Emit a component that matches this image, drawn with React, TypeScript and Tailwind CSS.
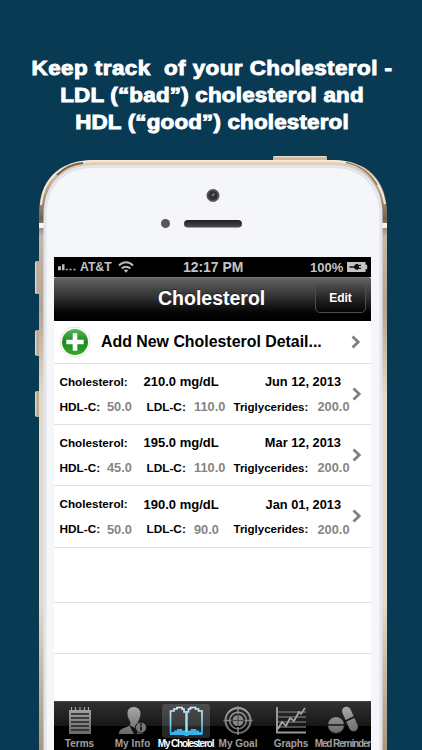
import type { ReactNode } from "react";

const readings = [
  { total: "210.0 mg/dL", date: "Jun 12, 2013", hdl: "50.0", ldl: "110.0", triglycerides: "200.0" },
  { total: "195.0 mg/dL", date: "Mar 12, 2013", hdl: "45.0", ldl: "110.0", triglycerides: "200.0" },
  { total: "190.0 mg/dL", date: "Jan 01, 2013", hdl: "50.0", ldl: "90.0", triglycerides: "200.0" },
];

function Chevron() {
  return (
    <svg width="10" height="14" viewBox="0 0 10 14" className="shrink-0">
      <path d="M1.5 1.5 7.2 7 1.5 12.5" fill="none" stroke="#808080" strokeWidth="2.8" />
    </svg>
  );
}

function PhoneBody() {
  return (
    <svg width="422" height="600" viewBox="0 150 422 600" className="absolute left-0 top-[150px]">
      <defs>
        <linearGradient id="rim" x1="0" y1="160" x2="0" y2="750" gradientUnits="userSpaceOnUse">
          <stop offset="0" stopColor="#e8d5bd" />
          <stop offset="0.06" stopColor="#b09a7f" />
          <stop offset="0.1" stopColor="#74624f" />
          <stop offset="0.13" stopColor="#c5b7a5" />
          <stop offset="0.25" stopColor="#b6a48e" />
          <stop offset="0.4" stopColor="#e5d9c8" />
          <stop offset="0.75" stopColor="#e5d9c8" />
          <stop offset="1" stopColor="#aa967d" />
        </linearGradient>
        <linearGradient id="button" x1="0" x2="1">
          <stop offset="0" stopColor="#eee4d5" />
          <stop offset="0.4" stopColor="#b4a590" />
          <stop offset="1" stopColor="#d5c7b4" />
        </linearGradient>
        <linearGradient id="speaker" x1="0" y1="0" x2="0" y2="1">
          <stop offset="0" stopColor="#202022" />
          <stop offset="1" stopColor="#4c4c4e" />
        </linearGradient>
      </defs>
      <rect x="273" y="156" width="54" height="8" rx="1" fill="#cbb9a2" />
      <path d="M274 156.8h52" stroke="#f0e5d6" strokeWidth="1" />
      <rect x="35" y="261" width="6" height="33" rx="1.5" fill="url(#button)" />
      <rect x="35" y="330" width="6" height="26" rx="2" fill="url(#button)" />
      <rect x="35" y="391" width="6" height="26" rx="2" fill="url(#button)" />
      <path d="M39 760V214C39 180 59 160 93 160H333C367 160 387 180 387 214V760Z" fill="url(#rim)" />
      <path d="M41 205C43 179 61 162.5 92 161H334C362 162 381 178 385 204" fill="none" stroke="#f5e8d6" strokeWidth="2" />
      <path d="M57 175C64 168 72 164 83 163" fill="none" stroke="#74624f" strokeWidth="2" />
      <path d="M346 162.5C362 166 371 174 377 185" fill="none" stroke="#8d7a63" strokeWidth="1.6" />
      <path d="M39 225.5h6M381 225.5h6" stroke="#f7f5f3" strokeWidth="5" />
      <path d="M43.5 760V215C43.5 184 62 165 93 165H333C364 165 382.5 184 382.5 215V760Z" fill="#e3e5ee" />
      <path d="M46.5 760V216C46.5 186 64 168 94 168H332C361 168 379.5 186 379.5 216V760Z" fill="#f5f6fa" />
      <circle cx="213" cy="195.5" r="6.5" fill="#555558" />
      <circle cx="213" cy="195.5" r="4.5" fill="#303033" />
      <path d="m212 196 2.5-2.5" stroke="#8a8a90" strokeWidth="1.5" />
      <circle cx="165.5" cy="223.5" r="4.5" fill="#58585c" />
      <rect x="184" y="220" width="58" height="7.5" rx="3.75" fill="url(#speaker)" />
    </svg>
  );
}

function StatusBar() {
  return (
    <div className="flex h-5 items-center bg-black text-[13px] leading-5 text-[#c4c4c4]">
      <svg width="20" height="20" viewBox="0 0 20 20" className="ml-[3px]">
        <path d="M1 9.3h3v4h-3zM5 7.3h2.5v6H5zM8.7 11.8h2v1.5h-2zM12.5 11.8h2v1.5h-2zM16.5 11.8h2v1.5h-2z" fill="#b9b9b9" />
      </svg>
      <span className="ml-[3px] w-[34px] text-[12.2px]">AT&amp;T</span>
      <svg width="16" height="14" viewBox="0 0 16 14" className="ml-[4px]" fill="none" stroke="#b9b9b9" strokeWidth="2">
        <path d="M1 5.5C5 1.2 11 1.2 15 5.5M3.7 8.5c2.5-2.5 6.1-2.5 8.6 0" />
        <path d="m8 12.7-2.2-2.4c1.2-1 3.2-1 4.4 0Z" fill="#b9b9b9" stroke="none" />
      </svg>
      <span className="ml-[49px] w-[127px] text-[13.9px] whitespace-nowrap">12:17 PM</span>
      <span className="w-[37px] pt-px">100%</span>
      <svg width="22" height="12" viewBox="0 0 22 12" className="shrink-0">
        <path d="M0 1h18.5v2.7h1.7v4.6h-1.7V11H0Z" fill="#c4c4c4" />
        <path d="M2.5 5.2H7c1-1.7 2-2.4 4-2.4v1h3v1.3h-2v1.6h2V8h-3v1c-2 0-3-.7-4-2.200H2.5Z" fill="#111" />
      </svg>
    </div>
  );
}

function NavBar() {
  return (
    <div className="flex h-[44px] rounded-t-[2px] border-t border-[#777] bg-linear-to-b from-[#636363] via-[#2b2b2b] via-50% to-black">
      <h2 className="ml-[104px] w-[157px] text-[19.5px] leading-[41px] text-white [text-shadow:0_-1px_0_#222]">
        Cholesterol
      </h2>
      <button className="mt-[6px] h-[29px] w-[51px] rounded-[5px] border border-[#4c4c4c] bg-linear-to-b from-[#4b4b4b] via-[#202020] via-55% to-[#050505] pb-px text-[12px] text-white">
        Edit
      </button>
    </div>
  );
}

function AddRow() {
  return (
    <div className="flex h-[42.5px] items-center border-b border-[#dfdfdf]">
      <svg width="32" height="32" viewBox="0 0 32 32" className="ml-[5px] shrink-0">
        <defs>
          <linearGradient id="add" x1="0" y1="0" x2="0" y2="1">
            <stop offset="0" stopColor="#58b65a" />
            <stop offset="0.5" stopColor="#178b1b" />
            <stop offset="1" stopColor="#36a829" />
          </linearGradient>
        </defs>
        <circle cx="16" cy="16" r="15" fill="#fff" stroke="#e5e5e5" />
        <circle cx="16" cy="16" r="13" fill="url(#add)" />
        <path d="M16 7.3v17.4M7.3 16h17.4" stroke="#fff" strokeWidth="4.6" />
      </svg>
      <span className="ml-[10px] w-[250px] pt-px text-[15.9px] whitespace-nowrap">Add New Cholesterol Detail...</span>
      <Chevron />
    </div>
  );
}

function ReadingRow({ total, date, hdl, ldl, triglycerides }: (typeof readings)[number]) {
  return (
    <div className="flex h-[61.4px] items-center border-b border-[#dfdfdf] pl-[5.5px] whitespace-nowrap">
      <div className="w-[292.5px] pt-[0.8px] text-[11.7px]">
        <div className="flex h-[25px] items-center leading-4">
          <span className="w-[84px]">Cholesterol:</span>
          <span className="pt-px text-[13px]">{total}</span>
          <span className="ml-auto mr-[11px] pt-px text-[12.8px]">{date}</span>
        </div>
        <div className="flex h-[25px] items-center leading-4">
          <span className="w-[47.5px] text-[11.8px]">HDL-C:</span>
          <span className="w-[39.5px] pt-px text-[12.8px] text-[#858585]">{hdl}</span>
          <span className="w-[47.5px] text-[11.8px]">LDL-C:</span>
          <span className="w-[39.5px] pt-px text-[12.8px] text-[#858585]">{ldl}</span>
          <span className="w-[84px] text-[11.5px]">Triglycerides:</span>
          <span className="pt-px text-[12.8px] text-[#858585]">{triglycerides}</span>
        </div>
      </div>
      <Chevron />
    </div>
  );
}

function Tab({ label, className, active, children }: { label: string; className: string; active?: boolean; children: ReactNode }) {
  return (
    <div className={`flex shrink-0 flex-col items-center whitespace-nowrap text-[10px] ${active ? "text-white" : "text-[#a0a0a0]"} ${className}`}>
      <div className={`mt-[2px] flex h-[34px] w-[48px] items-center justify-center rounded-[3px] ${active ? "bg-white/15" : ""}`}>
        <svg width="34" height="32" viewBox="0 0 34 32" className="shrink-0">{children}</svg>
      </div>
      <span className="leading-[11px]">{label}</span>
    </div>
  );
}

function TabBar() {
  return (
    <div className="flex h-[49px] overflow-hidden border-t border-[#444] bg-[linear-gradient(#303030,#171717_50%,#000_50%)]">
      <svg width="0" height="0" className="absolute">
        <defs>
          <linearGradient id="gray" x1="0" y1="0" x2="0" y2="32" gradientUnits="userSpaceOnUse">
            <stop offset="0" stopColor="#ababab" />
            <stop offset="1" stopColor="#626262" />
          </linearGradient>
          <linearGradient id="blue" x1="0" y1="0" x2="0" y2="32" gradientUnits="userSpaceOnUse">
            <stop offset="0" stopColor="#e4f6ff" />
            <stop offset="0.5" stopColor="#84d1f3" />
            <stop offset="1" stopColor="#18a4e8" />
          </linearGradient>
        </defs>
      </svg>
      <Tab label="Terms" className="w-[51px]">
        <path d="M6 5h22v24H6z" fill="url(#gray)" />
        <path d="M8.5 2v4M12.5 2v4M17 2v4M21.5 2v4M25.5 2v4" stroke="#a5a5a5" strokeWidth="1.2" />
        <path d="M8 9h18M8 13h18M8 17h18M8 21h18M8 25h18" stroke="#222" strokeWidth="1.3" />
      </Tab>
      <Tab label="My Info" className="ml-[2px] w-[51px] tracking-[0.1px]">
        <path d="M17.500 2c-4 0-6.300 3-6 7 .3 4 2 6 2.800 8 .5 3-1 4-5 5.500C5 24 3 25.500 3 29h24V19l-5-2c1-3 2.500-5 2.500-8.500 0-4-3-6.500-7-6.500Z" fill="url(#gray)" />
        <path d="m13 20 5 9h3l1-11-3 5Z" fill="#111" />
        <circle cx="25" cy="22.5" r="5.5" fill="#777" stroke="#111" />
        <path d="M25 21.5v4M25 18.500v2" stroke="#161616" strokeWidth="1.8" />
      </Tab>
      <Tab label="My Cholesterol" active className="w-[55px] tracking-[-1.15px]">
        <path d="M1.5 28V6H5V4h3V2.5h5V4h2v3h2.500V7h2V4h2V2.500h5V4h3v2h3.500v22" fill="none" stroke="url(#blue)" strokeWidth="1.7" />
        <path d="M17.500 6v21" stroke="#9bdcf8" strokeWidth="2.5" />
        <path d="M1 27h4v-1.500h3V24h5v1.500h3V27h3v-1.500h3V24h5v1.500h3V27h3.500v3H19.500v1h-4v-1H1Z" fill="#35b4ee" />
      </Tab>
      <Tab label="My Goal" className="w-[50px]">
        <g fill="none" stroke="url(#gray)">
          <circle cx="17" cy="15.5" r="12.5" strokeWidth="2" />
          <circle cx="17" cy="15.5" r="8.3" strokeWidth="1.5" />
          <path d="M17 1v8M17 22v8M2.500 15.500h8M23.500 15.500h8" stroke="#898989" strokeWidth="1.5" />
        </g>
        <circle cx="17" cy="15.5" r="5.5" fill="#888" />
        <path d="M17 10v11M11.500 15.500h11" stroke="#444" strokeWidth="1" />
      </Tab>
      <Tab label="Graphs" className="ml-[3px] w-[50px] tracking-[-0.1px]">
        <path d="M4 7h28M4 12h28M4 17h28M4 22h28" stroke="#686868" strokeWidth="1.3" />
        <path d="M3 2v25.500h29" fill="none" stroke="#9a9a9a" strokeWidth="2" />
        <path d="m4 24 4-7 4 4 4-8 4 3 5-9 2 2 4-6" fill="none" stroke="#a5a5a5" strokeWidth="1.7" />
      </Tab>
      <Tab label="Med Reminder" className="-ml-px w-[55px] tracking-[-1.1px]">
        <g transform="rotate(-24 24 14)">
          <rect x="19.5" y="1" width="9" height="26" rx="4.5" fill="url(#gray)" />
          <path d="M18 14h12" stroke="#111" strokeWidth="1.5" />
        </g>
        <circle cx="10" cy="20" r="8.5" fill="url(#gray)" stroke="#111" />
        <path d="M1 20h18" stroke="#151515" strokeWidth="1.5" />
      </Tab>
    </div>
  );
}

export default function App() {
  return (
    <main className="relative flex h-[750px] w-[422px] flex-col overflow-hidden bg-[#093a54] font-['Liberation_Sans',Arial,sans-serif] font-bold text-black">
      <h1 className="h-[257px] w-[424px] origin-center scale-x-[1.12] pt-[54.5px] text-center text-[20px] leading-[27px] tracking-[0.4px] whitespace-pre text-white [-webkit-text-stroke:0.9px_white]">
        <span className="block">Keep track  of your Cholesterol -</span>
        <span className="block tracking-[0.18px]">LDL (“bad”) cholesterol and</span>
        <span className="block tracking-[0.15px]">HDL (“good”) cholesterol</span>
      </h1>
      <PhoneBody />
      <section className="relative ml-[54px] flex h-[493px] w-[317px] flex-col overflow-hidden bg-white">
        <StatusBar />
        <NavBar />
        <AddRow />
        {readings.map((reading) => (
          <ReadingRow key={reading.date} {...reading} />
        ))}
        <div className="h-[55px] border-b border-[#dfdfdf]" />
        <div className="h-[51px] border-b border-[#dfdfdf]" />
        <div className="flex-1" />
        <TabBar />
      </section>
    </main>
  );
}
